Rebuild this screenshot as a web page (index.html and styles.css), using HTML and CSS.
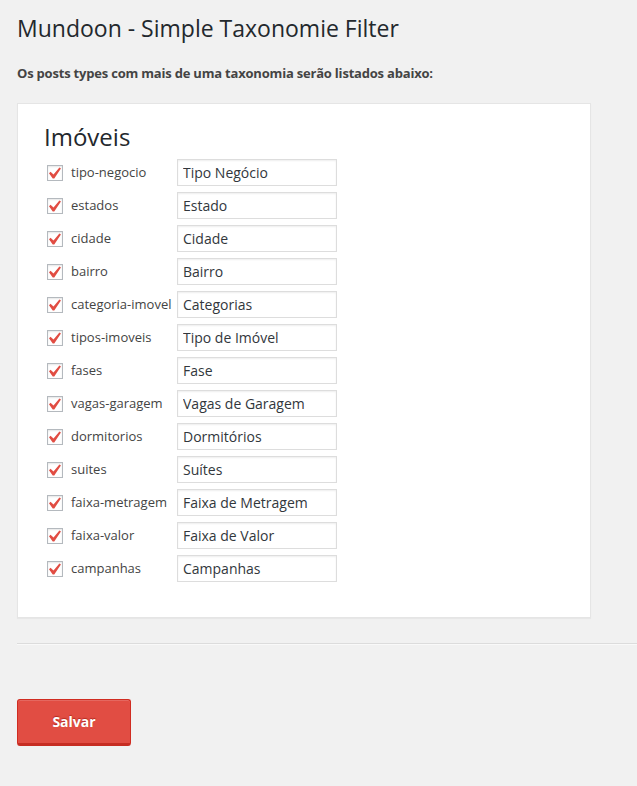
FILE: index.html
```html
<!DOCTYPE html>
<html lang="pt-BR">
<head>
<meta charset="utf-8">
<title>Mundoon - Simple Taxonomie Filter</title>
<link rel="stylesheet" href="styles.css">
</head>
<body>
<div class="wrap">
  <h1 class="title">Mundoon - Simple Taxonomie Filter</h1>
  <p class="intro">Os posts types com mais de uma taxonomia serão listados abaixo:</p>
  <div class="card">
    <h2 class="card-title">Imóveis</h2>
    <div class="rows">
      <div class="row"><span class="check"></span><span class="label">tipo-negocio</span><input class="field" type="text" value="Tipo Negócio"></div>
      <div class="row"><span class="check"></span><span class="label">estados</span><input class="field" type="text" value="Estado"></div>
      <div class="row"><span class="check"></span><span class="label">cidade</span><input class="field" type="text" value="Cidade"></div>
      <div class="row"><span class="check"></span><span class="label">bairro</span><input class="field" type="text" value="Bairro"></div>
      <div class="row"><span class="check"></span><span class="label">categoria-imovel</span><input class="field" type="text" value="Categorias"></div>
      <div class="row"><span class="check"></span><span class="label">tipos-imoveis</span><input class="field" type="text" value="Tipo de Imóvel"></div>
      <div class="row"><span class="check"></span><span class="label">fases</span><input class="field" type="text" value="Fase"></div>
      <div class="row"><span class="check"></span><span class="label">vagas-garagem</span><input class="field" type="text" value="Vagas de Garagem"></div>
      <div class="row"><span class="check"></span><span class="label">dormitorios</span><input class="field" type="text" value="Dormitórios"></div>
      <div class="row"><span class="check"></span><span class="label">suites</span><input class="field" type="text" value="Suítes"></div>
      <div class="row"><span class="check"></span><span class="label">faixa-metragem</span><input class="field" type="text" value="Faixa de Metragem"></div>
      <div class="row"><span class="check"></span><span class="label">faixa-valor</span><input class="field" type="text" value="Faixa de Valor"></div>
      <div class="row"><span class="check"></span><span class="label">campanhas</span><input class="field" type="text" value="Campanhas"></div>
    </div>
  </div>
  <hr class="divider">
  <button class="save" type="button">Salvar</button>
</div>
</body>
</html>
```
FILE: styles.css
```css
html, body {
  margin: 0;
  padding: 0;
  background: #f1f1f1;
  font-family: "Open Sans", "Noto Sans", sans-serif;
  color: #23282d;
}
.wrap {
  padding: 14px 0 0 17px;
}
.title {
  margin: 0;
  font-size: 23px;
  line-height: 29px;
  font-weight: 400;
  color: #23282d;
}
.intro {
  margin: 21px 0 0 0;
  font-size: 13px;
  line-height: 18px;
  font-weight: 700;
  letter-spacing: -0.2px;
  color: #444;
}
.card {
  margin-top: 21px;
  width: 574px;
  box-sizing: border-box;
  background: #fff;
  border: 1px solid #e5e5e5;
  box-shadow: 0 1px 1px rgba(0,0,0,0.04);
  padding: 18px 0 35px 26px;
}
.card-title {
  margin: 0;
  font-size: 24px;
  line-height: 30px;
  font-weight: 400;
  color: #23282d;
}
.rows {
  margin-top: 7px;
  display: flex;
  flex-direction: column;
  gap: 6px;
  padding-left: 3px;
}
.row {
  display: flex;
  align-items: center;
  height: 27px;
}
.check {
  position: relative;
  width: 16px;
  height: 16px;
  box-sizing: border-box;
  border: 1px solid #b4b9be;
  background: #fff;
  box-shadow: inset 0 1px 2px rgba(0,0,0,0.1);
  margin-right: 8px;
  flex: none;
}
.check::after {
  content: "";
  position: absolute;
  left: 0;
  top: 0;
  width: 14px;
  height: 14px;
  background: #e14d43;
  clip-path: polygon(11.4px 2px, 12.95px 3.1px, 6.27px 13px, 4.73px 13px, 1px 7.64px, 2.54px 6.17px, 5.5px 9px);
}
.label {
  width: 106px;
  flex: none;
  font-size: 13px;
  line-height: 18px;
  color: #444;
  margin-top: -2px;
  white-space: nowrap;
}
.field {
  width: 160px;
  height: 27px;
  box-sizing: border-box;
  margin: 0;
  padding: 0 5px;
  border: 1px solid #ddd;
  box-shadow: inset 0 1px 2px rgba(0,0,0,0.07);
  background: #fff;
  font-family: "Open Sans", "Noto Sans", sans-serif;
  font-size: 14px;
  color: #32373c;
  outline: none;
}
.divider {
  margin: 25px 0 0 0;
  height: 0;
  border: 0;
  border-top: 1px solid #dcdcdc;
  border-bottom: 1px solid #f9f9f9;
}
.save {
  margin-top: 54px;
  width: 114px;
  height: 47px;
  box-sizing: border-box;
  background: #e14d43;
  border: 1px solid #d02c21;
  border-bottom: 3px solid #c62d22;
  border-radius: 3px;
  box-shadow: inset 0 1px 0 rgba(255,255,255,0.15);
  color: #fff;
  font-family: "Open Sans", "Noto Sans", sans-serif;
  font-size: 14px;
  font-weight: 700;
  text-shadow: 0 -1px 1px #b32b22;
  padding: 0 0 1px 0;
  cursor: pointer;
}
```
